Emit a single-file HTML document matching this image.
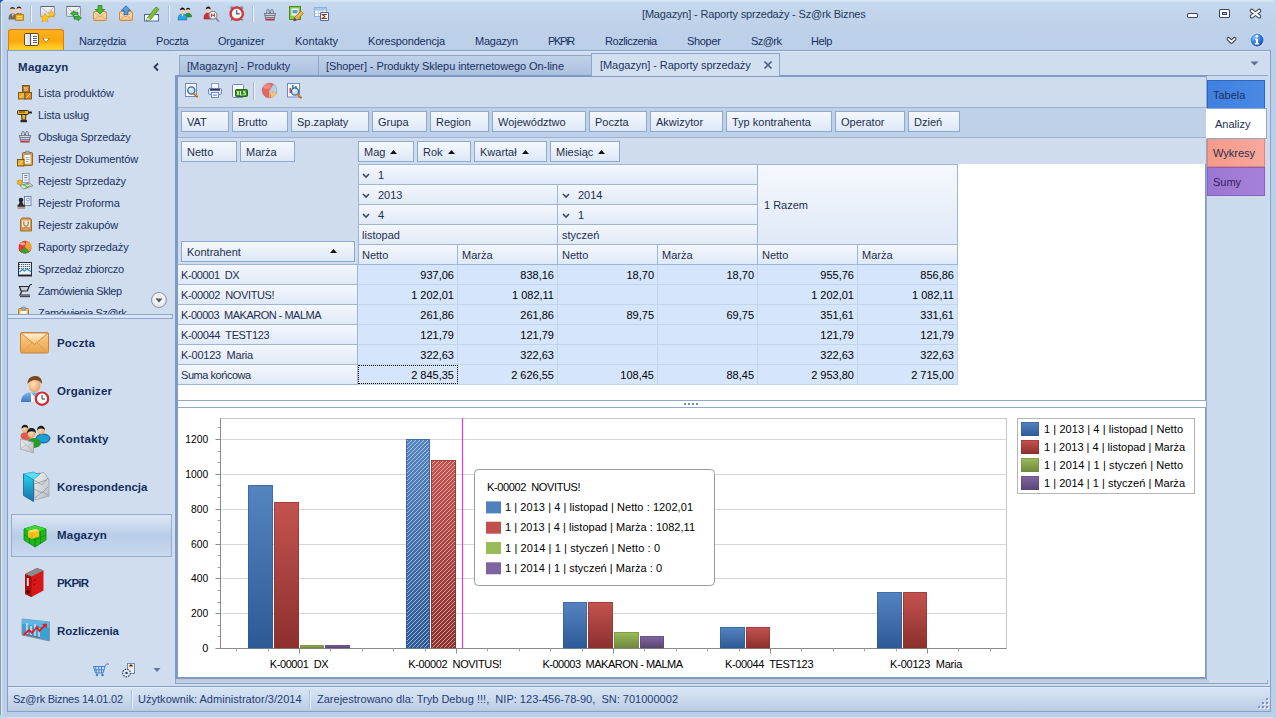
<!DOCTYPE html>
<html><head><meta charset="utf-8"><title>Sz@rk Biznes</title>
<style>
*{box-sizing:border-box;margin:0;padding:0}
html,body{width:1276px;height:718px;overflow:hidden}
body{position:relative;font-family:"Liberation Sans",sans-serif;font-size:11px;color:#1e2f4f;background:#bfd3eb;line-height:13px}
.a{position:absolute}
.t{position:absolute;white-space:pre;height:13px;line-height:13px;color:#1b3260}
/* window */
#win{left:0;top:0;width:1276px;height:718px;background:linear-gradient(#dce8f6 0,#c6d8ee 3px,#bed1e9 26px,#bccfe9 50px,#bccfe9 100%);border-radius:5px 5px 0 0}
#title{left:642px;top:8px;color:#1e395b}
.mi{top:35px;color:#152f5e}
/* left nav */
#client{left:7px;top:50px;width:1264px;height:662px;background:#d0ddef;border:1px solid #86a1c8}
#nav{left:8px;top:51px;width:167px;height:635px;background:#d0ddef}
.ni{left:38px;color:#1b3260}
.ng{left:57px;font-weight:bold;color:#142e5e;font-size:11.5px}
/* tab strip */
#tabstrip{left:175px;top:51px;width:1095px;height:25px;background:#d0ddef;border-top:1px solid #dde8f5}
.tab{top:55px;height:21px;border:1px solid #8ea7c9;border-bottom:none;background:linear-gradient(#bfd1e9,#a9c0de);color:#1e2f4f}
.tab.on{z-index:3;top:53px;height:23px;background:#d2dff0;border-color:#8ea7c9}
/* content frame */
#frame{left:175px;top:75px;width:1093px;height:609px;background:#d0ddef;border:1px solid #8ca5c9}
#pane{left:175px;top:75px;width:1032px;height:604px;background:#fff;border:2px solid #7f9bc4;border-left-width:3px}
#tb{left:178px;top:77px;width:1028px;height:30px;background:#cfdcee}
#flt{left:178px;top:107px;width:1028px;height:31px;background:#bfd1e8;border-top:1px solid #9ab1d2;border-bottom:1px solid #9ab1d2}
#colarea{left:178px;top:138px;width:1028px;height:26px;background:#cfdcee}
#rowarea{left:178px;top:138px;width:180px;height:126px;background:#cfdcee}
.fb{height:21px;border:1px solid #8ea9cd;background:linear-gradient(#f4f8fd,#dde8f6);color:#1e2f4f;padding:4px 0 0 5px;white-space:pre}
.hc{border:1px solid #9db5d6;background:linear-gradient(#f5f8fd,#dfe9f7);color:#1e2f4f;padding:4px 0 0 3px;white-space:pre;height:21px}
.dc{height:20px;background:#d5e5fb;border-right:1px solid #c3d4ec;border-bottom:1px solid #c3d4ec;text-align:right;padding:4px 3px 0 0;color:#000;white-space:pre}
/* status */
#status{left:8px;top:686px;width:1262px;height:25px;background:linear-gradient(#f4f8fc 0,#d6e3f3 1px,#d0def0 8px,#bbcbe2 24px);border-top:1px solid #86a1c8}
</style></head><body>
<div class="a" style="left:0;top:0;width:4px;height:4px;background:#0c52d2"></div><div id="win" class="a"></div><div class="a" style="left:0;top:4px;width:3px;height:714px;background:linear-gradient(90deg,#8c98ab 1px,#dbe7f5 1px,#dbe7f5 2px,#c6d7ec 2px)"></div>
<div class="a" style="left:0;top:715px;width:2px;height:3px;background:#8fe6f6"></div><div class="a" style="left:2px;top:717px;width:1272px;height:1px;background:#d3e2f4"></div><div id="title" class="t" style="left:642px;letter-spacing:-0.173px">[Magazyn] - Raporty sprzedaży - Sz@rk Biznes</div>


<!-- quick toolbar icons -->
<svg class="a" style="left:0;top:0" width="340" height="29" viewBox="0 0 340 29">
 <defs><linearGradient id="qe" x1="0" y1="0" x2="0" y2="1"><stop offset="0" stop-color="#f4f5f7"/><stop offset="1" stop-color="#d4d8de"/></linearGradient>
 <linearGradient id="qo" x1="0" y1="0" x2="0" y2="1"><stop offset="0" stop-color="#fce8c8"/><stop offset="1" stop-color="#f2c088"/></linearGradient></defs>
 <g stroke="#a9bedb"><path d="M30.500 6v17M168.500 6v17M252.500 6v17"/></g>
 <g stroke="#edf3fa"><path d="M31.500 6v17M169.500 6v17M253.500 6v17"/></g>
 <!-- 1 people+card -->
 <g><path d="M8.500 19.500c0-4.500 1.500-6 4-6s4 1.500 4 6z" fill="#7a6a5e"/><path d="M14.500 19c0-4.500 1.500-6 4.500-6s4 1.500 4 6z" fill="#6a5a50"/><path d="M12 14l.8 3 .8-3zM18.500 13.500l.8 3 .8-3z" fill="#f4f4f4"/><ellipse cx="12.500" cy="10.200" rx="2.300" ry="2.800" fill="#f6cdb0"/><ellipse cx="19" cy="9.800" rx="2.300" ry="2.800" fill="#f6cdb0"/><path d="M10 9.500c0-3.500 5-3.500 5 0-1.500-1.300-3.500-1.300-5 0zM16.500 9c0-3.500 5-3.500 5 0-1.500-1.300-3.500-1.300-5 0z" fill="#2a2018"/><rect x="15.500" y="14.500" width="8" height="6" fill="#f0b020" stroke="#b87a08" stroke-width=".8"/><path d="M17 16.500h5M17 18.500h5" stroke="#fde8a0" stroke-width=".8"/></g>
 <!-- 2 envelope stars -->
 <g><rect x="40.500" y="6.500" width="14" height="10" rx="1" fill="url(#qe)" stroke="#8a93a3"/><path d="M40.500 6.500h14" stroke="#5a6578"/><path d="M41 7l6.500 6 6.500-6" fill="none" stroke="#a8afbb" stroke-width=".8"/><path d="M45 13l1.400 3 3.300.4-2.400 2.300.6 3.300-2.900-1.600-2.900 1.600.6-3.300-2.400-2.300 3.300-.4z" fill="#fcc81e" stroke="#e8960c" stroke-width=".6"/><path d="M51.500 10.500l1.100 2.300 2.500.3-1.800 1.800.4 2.500-2.200-1.200-2.200 1.200.4-2.500-1.800-1.800 2.500-.3z" fill="#fcc81e" stroke="#e8960c" stroke-width=".6"/></g>
 <!-- 3 envelope arrows -->
 <g><rect x="66.500" y="6.500" width="14" height="10" rx="1" fill="url(#qe)" stroke="#8a93a3"/><path d="M66.500 6.500h14" stroke="#5a6578"/><path d="M67 7l6.500 6 6.500-6" fill="none" stroke="#a8afbb" stroke-width=".8"/><path d="M78 12.300h-4v-1.600l-3.500 2.800 3.500 2.800v-1.600h4z" fill="#36c036" stroke="#1c6a1c" stroke-width=".6"/><path d="M74 16.800h4v-1.600l3.500 2.800-3.500 2.800v-1.600h-4z" fill="#36c036" stroke="#1c6a1c" stroke-width=".6"/></g>
 <!-- 4 mail in -->
 <g><rect x="93.500" y="11.500" width="13" height="9" rx="1" fill="url(#qo)" stroke="#cc8a3c"/><path d="M94 12l6 5 6-5M94 20l4.500-4M106 20l-4.500-4" fill="none" stroke="#d89a50" stroke-width=".8"/><path d="M98 5.500h4v4h2.800l-4.800 4.700-4.800-4.700h2.800z" fill="#4ab82c" stroke="#2a7a14" stroke-width=".7"/></g>
 <!-- 5 mail out -->
 <g><rect x="119.500" y="11.500" width="13" height="9" rx="1" fill="url(#qo)" stroke="#cc8a3c"/><path d="M120 12l6 5 6-5M120 20l4.500-4M132 20l-4.500-4" fill="none" stroke="#d89a50" stroke-width=".8"/><path d="M124 14.500h4v-4h2.800l-4.800-4.700-4.800 4.700h2.800z" fill="#5a9ae0" stroke="#2a5a9c" stroke-width=".7"/></g>
 <!-- 6 pencil note -->
 <g><rect x="144.500" y="14.500" width="14" height="6.500" fill="#fff" stroke="#4a68b0"/><path d="M147.500 17.500l8.500-10.500 3 2.300-8.500 10.500-4 1.200z" fill="#7cc030" stroke="#4a7a18" stroke-width=".7"/><path d="M147.500 17.500l3 2.300-4 1.200z" fill="#f0d8a0"/><path d="M146.500 21l1.200-.4-.8-.8z" fill="#222"/></g>
 <!-- 7 two users -->
 <g><path d="M185 17c0-3 1.200-4 3-4s3.500 1 3.500 4z" fill="#2e9a2e" stroke="#1a6a1a" stroke-width=".5"/><ellipse cx="188" cy="10.500" rx="1.900" ry="2.300" fill="#f6cdb0"/><path d="M186 10c0-3 4.200-3 4.200 0-1.200-1-3-1-4.200 0z" fill="#1a1410"/><path d="M178 20c0-4.500 1.500-6 4.500-6s4.500 1.500 4.500 6z" fill="#2aa4dc" stroke="#146a9c" stroke-width=".5"/><path d="M181.500 14.200l1 2.500 1-2.500z" fill="#fff"/><ellipse cx="182.500" cy="11" rx="2.300" ry="2.800" fill="#f6cdb0"/><path d="M180 10.500c0-4 5-4 5 0-1.500-1.300-3.500-1.300-5 0z" fill="#1a1410"/></g>
 <!-- 8 user search -->
 <g><path d="M204 19c0-4.500 1.500-6 4.300-6s4.200 1.500 4.200 6z" fill="#d03030" stroke="#8a1414" stroke-width=".5"/><ellipse cx="208.300" cy="10" rx="2.200" ry="2.700" fill="#f6cdb0"/><path d="M205.800 9.500c0-4 5-4 5 0-1.500-1.300-3.500-1.300-5 0z" fill="#1a1410"/><circle cx="213" cy="15.200" r="3.900" fill="#fff" stroke="#8a8e98" stroke-width="1.200"/><path d="M216 18.300l2.500 2.700" stroke="#8a8e98" stroke-width="1.800" stroke-linecap="round"/><path d="M211.600 13.500v3.400M214.400 13.500v3.400M211.600 15.200h2.800" stroke="#d02020" stroke-width="1"/></g>
 <!-- 9 alarm clock -->
 <g><circle cx="231.800" cy="7.800" r="1.800" fill="#8a94a8"/><circle cx="241.600" cy="7.800" r="1.800" fill="#8a94a8"/><path d="M232.500 18.500l-1.500 2M241 18.500l1.500 2" stroke="#5a6478" stroke-width="1.200"/><circle cx="236.700" cy="13.700" r="6" fill="#fff" stroke="#e03838" stroke-width="2.200"/><circle cx="236.700" cy="13.700" r="7" fill="none" stroke="#b82020" stroke-width=".5"/><path d="M236.700 10v3.900h3" fill="none" stroke="#3a4a7a" stroke-width="1.100"/></g>
 <!-- 10 basket -->
 <g fill="none" stroke="#5e6270"><path d="M266.500 14c0-6 3-6 3-1M273.500 14c0-6-3-6-3-1" stroke-width=".9"/><path d="M264 13.500h12M264.800 15.500h10.400M265.300 17.500h9.400" stroke="#7a7e8c" stroke-width="1.100"/><path d="M264.500 13.500l1.200 5.500h8.600l1.200-5.500" stroke-width=".8"/><path d="M265.500 19.800h9" stroke="#d01818" stroke-width="1.300"/></g>
 <!-- 11 edit form -->
 <g><rect x="289.500" y="6.500" width="11" height="13" fill="#8cc850" stroke="#4a8a20"/><rect x="291.500" y="8.500" width="7" height="7" fill="#f4f8f0"/><rect x="292.500" y="10" width="5" height="3.500" fill="#5aa0d8"/><path d="M294.500 17.500l6.500-6.500 2.500 2.500-6.500 6.500-3.500 1z" fill="#f0b048" stroke="#a86a18" stroke-width=".7"/><path d="M293.500 21l1-3.500 2.500 2.500z" fill="#2a4a8a"/></g>
 <!-- 12 table sigma -->
 <g><rect x="314.500" y="7.500" width="12" height="9" fill="#fff" stroke="#8ab0e0"/><rect x="315" y="8" width="11" height="2" fill="#a8c8ee"/><path d="M314.500 10.500h12M314.500 13.500h12M318.500 8v8.500M322.500 8v8.500" stroke="#a8c8ee" stroke-width=".8"/><rect x="320.500" y="12.500" width="8" height="8" rx=".8" fill="#fff" stroke="#4a64a8" stroke-width="1.100"/><path d="M326.800 14.500h-4.300l2.200 2-2.200 2h4.300" fill="none" stroke="#8a3410" stroke-width="1.200"/></g>
</svg>
<!-- window buttons -->
<svg class="a" style="left:1180px;top:4px" width="90" height="22" viewBox="1180 4 90 22">
 <rect x="1187.500" y="13.500" width="10" height="4" rx="1.200" fill="#fff" stroke="#3b4560" stroke-width="1.100"/>
 <rect x="1219.500" y="9.500" width="10" height="8" rx="1.200" fill="#fff" stroke="#3b4560" stroke-width="1.100"/><rect x="1222.500" y="12.500" width="4" height="2" fill="#a8c0e4" stroke="#3b4560" stroke-width="1"/>
 <path d="M1251.800 10.800l7.400 5.600M1259.200 10.800l-7.400 5.600" stroke="#3b4560" stroke-width="4.200" stroke-linecap="round"/><path d="M1251.800 10.800l7.400 5.600M1259.200 10.800l-7.400 5.600" stroke="#fff" stroke-width="2.100" stroke-linecap="round"/>
</svg>
<!-- app button -->
<div class="a" style="left:8px;top:29px;width:56px;height:21px;border:1px solid #e8780a;border-bottom:none;border-radius:3px 3px 0 0;background:linear-gradient(#fbb01a,#fba70a 55%,#fdc520 80%,#fdd228)"></div>
<svg class="a" style="left:8px;top:29px" width="56" height="22" viewBox="0 0 56 22">
 <rect x="16.500" y="4.500" width="14" height="12" rx="1.500" fill="#fff" stroke="#6b4a1a"/><rect x="17.500" y="5.500" width="4.500" height="10" fill="#e6e8ec"/><path d="M22.500 4.500v12" stroke="#4a5878" stroke-width="1.200"/><path d="M25 7.500h4M25 9.500h4M25 11.500h4M25 13.500h4" stroke="#555f78" stroke-width="1"/>
 <path d="M34 8.900h8l-4 4.900z" fill="#a86c10"/><path d="M35.300 9.600h5.400l-2.700 3.300z" fill="#fff"/>
</svg>
<div class="t mi" style="left:79px;letter-spacing:-0.291px">Narzędzia</div>
<div class="t mi" style="left:156px;letter-spacing:-0.208px">Poczta</div>
<div class="t mi" style="left:218px;letter-spacing:-0.212px">Organizer</div>
<div class="t mi" style="left:295px;letter-spacing:0.027px">Kontakty</div>
<div class="t mi" style="left:368px;letter-spacing:-0.178px">Korespondencja</div>
<div class="t mi" style="left:475px;letter-spacing:-0.240px">Magazyn</div>
<div class="t mi" style="left:548px;letter-spacing:-1.327px">PKPiR</div>
<div class="t mi" style="left:605px;letter-spacing:-0.415px">Rozliczenia</div>
<div class="t mi" style="left:687px;letter-spacing:-0.317px">Shoper</div>
<div class="t mi" style="left:751px;letter-spacing:-0.568px">Sz@rk</div>
<div class="t mi" style="left:811px;letter-spacing:-0.408px">Help</div>
<svg class="a" style="left:1222px;top:30px" width="48" height="20" viewBox="1222 30 48 20">
 <defs><radialGradient id="inf" cx=".35" cy=".3" r=".8"><stop offset="0" stop-color="#8cc0f4"/><stop offset=".5" stop-color="#3a80dc"/><stop offset="1" stop-color="#1440b0"/></radialGradient></defs>
 <path d="M1228.500 38.800l3 3 3-3" fill="none" stroke="#2a3450" stroke-width="3.800" stroke-linejoin="round" stroke-linecap="round"/><path d="M1228.500 38.800l3 3 3-3" fill="none" stroke="#fff" stroke-width="1.900" stroke-linejoin="round" stroke-linecap="round"/>
 <circle cx="1257" cy="40" r="7.300" fill="#dce8f8"/><circle cx="1257" cy="40" r="6.500" fill="url(#inf)"/>
 <path d="M1255.300 38.800h2.700v4.300h1v1.300h-4.200v-1.300h1.200v-3h-.7z" fill="#fff"/><circle cx="1257" cy="36.300" r="1.300" fill="#fff"/>
</svg>

<div id="client" class="a"></div><div id="nav" class="a"></div>
<div class="t hd" style="left:18px;top:61px;font-weight:bold;font-size:11.5px;color:#142e5e;letter-spacing:0.304px">Magazyn</div>
<svg class="a" style="left:150px;top:61px" width="12" height="12" viewBox="0 0 12 12"><path d="M8 2.500l-3.500 3.500 3.500 3.500" fill="none" stroke="#2a3a58" stroke-width="1.800"/></svg>
<div class="a" style="left:8px;top:80px;width:167px;height:235px;overflow:hidden">
<div class="t ni" style="left:30px;top:7px;letter-spacing:-0.075px">Lista produktów</div>
<div class="t ni" style="left:30px;top:29px;letter-spacing:-0.159px">Lista usług</div>
<div class="t ni" style="left:30px;top:51px;letter-spacing:-0.200px">Obsługa Sprzedaży</div>
<div class="t ni" style="left:30px;top:73px;letter-spacing:-0.117px">Rejestr Dokumentów</div>
<div class="t ni" style="left:30px;top:95px;letter-spacing:-0.111px">Rejestr Sprzedaży</div>
<div class="t ni" style="left:30px;top:117px;letter-spacing:-0.089px">Rejestr Proforma</div>
<div class="t ni" style="left:30px;top:139px;letter-spacing:-0.073px">Rejestr zakupów</div>
<div class="t ni" style="left:30px;top:161px;letter-spacing:-0.057px">Raporty sprzedaży</div>
<div class="t ni" style="left:30px;top:183px;letter-spacing:-0.275px">Sprzedaż zbiorczo</div>
<div class="t ni" style="left:30px;top:205px;letter-spacing:-0.378px">Zamówienia Sklep</div>
<div class="t ni" style="left:30px;top:227px;letter-spacing:-0.449px">Zamówienia Sz@rk</div>
<svg class="a" style="left:0;top:0" width="40" height="250" viewBox="8 80 40 250">
 <!-- boxes -->
 <g stroke="#7a4e0c" stroke-width=".9"><rect x="22.500" y="85.500" width="7" height="7" fill="#b87a20"/><rect x="18.500" y="92.500" width="6.500" height="6.500" fill="#e8b030"/><rect x="25" y="92.500" width="6.500" height="6.500" fill="#e88a30"/></g><rect x="24.500" y="87.500" width="3" height="3" fill="#e0b060" stroke="#f0d090" stroke-width=".5"/><path d="M20 97.500l3.500-3.500M26.500 97.500l3.500-3.500" stroke="#fbe0a0" stroke-width=".9"/>
 <!-- drill -->
 <g><rect x="17.500" y="110.500" width="11" height="4" rx="1" fill="#f2b020" stroke="#2a2418" stroke-width=".9"/><path d="M28.500 111.500h3.500v2h-3.500z" fill="#2a2a30"/><path d="M19 112h6" stroke="#2a2418" stroke-width=".8"/><path d="M21.500 114.500h4.500l-.5 5.500h-3.500z" fill="#f2b020" stroke="#2a2418" stroke-width=".9"/><rect x="20.500" y="120" width="6.500" height="2.300" rx=".5" fill="#2a2a30"/></g>
 <!-- basket -->
 <g fill="none" stroke="#5e6270"><path d="M21.500 136c0-6 3-6 3-1M28.500 136c0-6-3-6-3-1" stroke-width=".9"/><path d="M19 135.500h12M19.800 137.500h10.400M20.300 139.500h9.400" stroke="#7a7e8c" stroke-width="1.100"/><path d="M19.500 135.500l1.200 5.500h8.600l1.200-5.500" stroke-width=".8"/><path d="M20.500 141.800h9" stroke="#d01818" stroke-width="1.300"/></g>
 <!-- docs clipboard -->
 <g><rect x="22.500" y="152.500" width="10" height="13" rx="1" fill="#d8a050" stroke="#8a5a18" stroke-width=".9"/><rect x="24.500" y="155" width="6" height="8.500" fill="#fff"/><rect x="25.500" y="151" width="4" height="3" rx=".8" fill="#a8aab0" stroke="#6a6c74" stroke-width=".5"/><path d="M25.500 157.500h4M25.500 159.500h4M25.500 161.500h3" stroke="#8890a0" stroke-width=".7"/><rect x="17.500" y="159.500" width="6.500" height="6.500" fill="#e8b030" stroke="#7a4e0c" stroke-width=".9"/><path d="M19 164.500l3.500-3.500" stroke="#fbe0a0" stroke-width=".9"/></g>
 <!-- sales register -->
 <g><rect x="22.500" y="173.500" width="6.500" height="9" fill="#f6f8fc" stroke="#7a8aa8" stroke-width=".8"/><path d="M24 175.500h3.500M24 177.500h3.500" stroke="#5a80c0" stroke-width=".9"/><rect x="24" y="179" width="3.500" height="2" fill="#c8d4e8"/><ellipse cx="19.800" cy="182.300" rx="2.600" ry="2.300" fill="#f4b820" stroke="#b87a08" stroke-width=".6"/><path d="M20 185.500l9-2.500 4 2.800-9.500 3.200z" fill="#e4f0dc" stroke="#5a6a5a" stroke-width=".7"/><path d="M23 186l6-1.800M25 187.500l5.500-1.800M24.500 184.500l3 3" stroke="#4a9a3a" stroke-width=".7"/></g>
 <!-- proforma stamp -->
 <g><rect x="24.500" y="196.500" width="6.500" height="9" fill="#f6f8fc" stroke="#5a78c0" stroke-width=".9"/><circle cx="28" cy="199.500" r="1.500" fill="none" stroke="#5a78c0" stroke-width=".8"/><path d="M26 203h3.500" stroke="#8aa0d0" stroke-width=".8"/><circle cx="21" cy="200" r="2.300" fill="#26262c"/><path d="M19.800 201.500h2.400l1.300 3.500h-5z" fill="#26262c"/><rect x="17.500" y="204.800" width="7.500" height="2" fill="#3a2a24"/><path d="M17.500 208h7.500" stroke="#8a5a40" stroke-width="1"/></g>
 <!-- purchases -->
 <g><path d="M20.500 219.500l1.500-1.500h8l1.500 1.500v11.500h-11z" fill="#d8a058" stroke="#9a6420" stroke-width=".9"/><rect x="22" y="220.500" width="8" height="6.500" fill="#f4e4cc"/><path d="M23.800 221.500v2.500a2.200 2.200 0 0 0 4.400 0v-2.500" fill="none" stroke="#7a6a5a" stroke-width="1"/><path d="M21 230.500l5-3.500 5 3.500" fill="none" stroke="#b8803a" stroke-width=".7"/></g>
 <!-- pie -->
 <g><ellipse cx="25" cy="248.500" rx="6.300" ry="5" fill="#8a2a20"/><circle cx="25" cy="247" r="6.300" fill="#e03a30"/><path d="M25 247l-4.600 4.400a6.300 6.300 0 0 0 9.200 0z" fill="#3aa030"/><path d="M25 247l1.500-6.100a6.300 6.300 0 0 1 4.800 6.500 6.300 6.300 0 0 1-1.700 4z" fill="#f4a030"/><ellipse cx="22.800" cy="243.800" rx="2.600" ry="1.500" fill="#fff" opacity=".55"/></g>
 <!-- sprzedaz zbiorczo -->
 <g><rect x="18.500" y="262.500" width="13" height="12.500" fill="#eef2f8" stroke="#2a3040" stroke-width="1"/><path d="M19 264.500h12M19 266.500h12M19 268.500h12" stroke="#2a3040" stroke-width=".8" stroke-dasharray="1.200 .8"/><path d="M19.500 272l3-2.500 2 1.500 2.500-2 4 2.500" fill="none" stroke="#2a8ad8" stroke-width="1.100"/><path d="M18 275.800h14" stroke="#1a1a20" stroke-width="1.300"/></g>
 <!-- zam sklep -->
 <g><path d="M19.500 286.500h9.500l-1.500 4.500h-6.500z" fill="#c8ccd4" stroke="#2a2a30" stroke-width="1.200"/><path d="M29 286.500l1.500-2h1.500" fill="none" stroke="#2a2a30" stroke-width="1.100"/><path d="M22 291l-2 4h10" fill="none" stroke="#2a2a30" stroke-width="1.200"/><path d="M20 296.500h10" stroke="#44464e" stroke-width="1.400"/></g>
 <!-- zam szark -->
 <g><rect x="18.500" y="308.500" width="10" height="12" rx="1" fill="#e8b860" stroke="#a87828" stroke-width=".9"/><rect x="20.500" y="311" width="6" height="8" fill="#fff"/><rect x="21.500" y="307" width="4" height="3" rx=".8" fill="#a8aab0" stroke="#6a6c74" stroke-width=".5"/></g>
</svg>
</div>
<svg class="a" style="left:150px;top:291px" width="18" height="18" viewBox="0 0 18 18"><circle cx="9" cy="9" r="7.500" fill="#e4e6ea" stroke="#8a93a3"/><circle cx="9" cy="8" r="6" fill="#f4f5f7" opacity=".7"/><path d="M5.500 7.500h7l-3.500 4z" fill="#4a5468"/></svg>
<div class="a" style="left:8px;top:314px;width:165px;height:5px;background:#d9e5f4;border:1px solid #8fa8cb;border-left:none"></div>
<div class="a" style="left:11px;top:514px;width:161px;height:43px;border:1px solid #93acd0;background:linear-gradient(#dbe6f4,#b9cde7 50%,#c9d9ee)"></div>
<div class="t ng" style="top:337px;letter-spacing:0.184px">Poczta</div>
<div class="t ng" style="top:385px;letter-spacing:0.164px">Organizer</div>
<div class="t ng" style="top:433px;letter-spacing:0.328px">Kontakty</div>
<div class="t ng" style="top:481px;letter-spacing:0.030px">Korespondencja</div>
<div class="t ng" style="top:529px;letter-spacing:0.204px">Magazyn</div>
<div class="t ng" style="top:577px;letter-spacing:-0.789px">PKPiR</div>
<div class="t ng" style="top:625px;letter-spacing:-0.064px">Rozliczenia</div>
<svg class="a" style="left:8px;top:322px" width="167" height="364" viewBox="8 322 167 364">
<defs>
<linearGradient id="env" x1="0" y1="0" x2="0" y2="1"><stop offset="0" stop-color="#fbd08a"/><stop offset="1" stop-color="#eaa24a"/></linearGradient>
<linearGradient id="envf" x1="0" y1="0" x2="0" y2="1"><stop offset="0" stop-color="#fff2d8"/><stop offset="1" stop-color="#f6c070"/></linearGradient>
<linearGradient id="gry" x1="0" y1="0" x2="1" y2="1"><stop offset="0" stop-color="#f4f4f4"/><stop offset="1" stop-color="#b8bcc2"/></linearGradient>
<linearGradient id="cy" x1="0" y1="0" x2="0" y2="1"><stop offset="0" stop-color="#22d4ee"/><stop offset="1" stop-color="#1a6ea8"/></linearGradient>
<linearGradient id="body" x1="0" y1="0" x2="0" y2="1"><stop offset="0" stop-color="#7fb4e8"/><stop offset="1" stop-color="#3a78c4"/></linearGradient>
<radialGradient id="face" cx=".4" cy=".4" r=".7"><stop offset="0" stop-color="#ffe0b8"/><stop offset="1" stop-color="#e0a060"/></radialGradient>
</defs>
<!-- Poczta envelope -->
<g><rect x="20.500" y="332.500" width="28" height="20.500" rx="1.500" fill="url(#env)" stroke="#c8843a"/><path d="M21 353l11-10M48 353l-11-10" stroke="#d89a50" stroke-width=".8" fill="none"/><path d="M21 333l13.500 11.500L48 333z" fill="url(#envf)" stroke="#c8843a" stroke-width=".9"/></g>
<!-- Organizer -->
<g><path d="M21 402c0-6 4-9 8-9.500h10c3 .5 5 3 5 9.500z" fill="url(#body)"/><path d="M31 392.500l3.500 4 3.500-4v9.500h-7z" fill="#f4f6fa"/><ellipse cx="34.500" cy="385.500" rx="6" ry="7" fill="url(#face)"/><path d="M27.500 384c0-6 4-8 8-8 4 0 7 3 6.500 8-2-3-5-4.500-8-4-2 .3-4.500 1.500-6.500 4z" fill="#7a4a1c"/><circle cx="42" cy="398.700" r="6.200" fill="#fff" stroke="#d22a2a" stroke-width="2.200"/><path d="M42 395v4h3" fill="none" stroke="#334" stroke-width="1"/></g>
<!-- Kontakty -->
<g><ellipse cx="26" cy="436" rx="5.500" ry="4" fill="#e05a50"/><ellipse cx="43" cy="438.500" rx="7" ry="4.500" fill="#1aa0d8" stroke="#0a3a78" stroke-width=".8"/><ellipse cx="34" cy="443" rx="7" ry="5" fill="#2a9a2a"/><ellipse cx="25" cy="429" rx="3.200" ry="3.800" fill="url(#face)"/><path d="M21.500 429c-.5-5.500 7-6 7 0-.8-2-5.500-2.500-7 0z" fill="#1c1c1c"/><ellipse cx="41" cy="430.500" rx="3.500" ry="4" fill="url(#face)"/><path d="M37.300 430.500c-.8-6 8-6.500 7.700 0-1-2.300-6-2.800-7.700 0z" fill="#1c1c1c"/><ellipse cx="31.500" cy="433.500" rx="4" ry="4.600" fill="url(#face)"/><path d="M27.300 433.500c-.8-7 9-7.500 8.700 0-1.200-2.800-7-3.200-8.700 0z" fill="#1c1c1c"/><path d="M20.500 439l13 3.500v10.500l-13-4z" fill="url(#gry)" stroke="#9a9ea6" stroke-width=".7"/><path d="M20.500 439l7 7.500 6-4M20.500 449l6-4.500M33.500 453l-5-6.500" fill="none" stroke="#a8acb4" stroke-width=".6"/></g>
<!-- Korespondencja -->
<g><path d="M33 474l11 -1.500 5 6.500v17l-14 4z" fill="url(#gry)" stroke="#9a9ea6" stroke-width=".7"/><path d="M34 480l8 5 6-7M34 489l8 4 6-6M34 484l13-4M35 498l7-6 6 3" fill="none" stroke="#8a8e98" stroke-width=".7"/><path d="M23.500 474l10 5.500v22l-10-6z" fill="url(#cy)" stroke="#1a5a98" stroke-width=".8"/><path d="M23.500 474l10-2 3 1.500h4l-7 6z" fill="#5ae0f4" stroke="#1a8ac8" stroke-width=".6"/></g>
<!-- Magazyn cube -->
<g><path d="M24 529l11-3.500 11 3.500v11l-11 7-11-7z" fill="#1eb81e" stroke="#0e8a0e" stroke-width=".8"/><path d="M24 529l11 4 11-4M35 533v14M24 535l11 5 11-5M29.500 531v13M40.500 531v13" fill="none" stroke="#0e8a0e" stroke-width=".8"/><path d="M24 529l11-3.500 11 3.500-11 4z" fill="#3ad83a"/><path d="M28 531l7.500-2 3.500 1.500v6l-7 2.500-4-2z" fill="#f8c018"/><path d="M28 531l4 1.500 7-2-3.500-1.500z" fill="#fde060"/><path d="M32 532.500v6.500" stroke="#d89a08" stroke-width=".8"/></g>
<!-- PKPiR binder -->
<g><path d="M25 574l12-6 6.500 2.500v20l-12 6.500-6.500-3z" fill="#d81818"/><path d="M25 574l6.500 2.500v20.500l-6.500-3z" fill="#a80e0e"/><path d="M25 574l12-6 6.500 2.500-12 6z" fill="#8a8a8a"/><rect x="26.800" y="578" width="2" height="8" fill="#f4d8d8"/><circle cx="28" cy="592" r="1.500" fill="#200"/><path d="M33 581l3-1.500M33 585l2.500-1.200" stroke="#8a0a0a" stroke-width=".9"/></g>
<!-- Rozliczenia -->
<g><path d="M22 619l27.500 3v19l-27.500-6z" fill="#3aa0d8" stroke="#8a8e98" stroke-width=".9"/><path d="M22 619l27.500 3v6l-27.500-4z" fill="#5ab8e8"/><path d="M27 623v11.500M31 626v9.500M35 624v12M39 628v9" stroke="#c8d4e0" stroke-width="1.800"/><path d="M26 634.500l14 3" stroke="#667" stroke-width="1"/><path d="M23.500 635l5.500-5 3 3 5-6 2.500 4 5-5.500" fill="none" stroke="#e81818" stroke-width="1.800"/><path d="M42 624l5-.5-.5 5z" fill="#e81818"/></g>
<!-- footer icons -->
<g fill="none" stroke="#3a7ac8" stroke-width=".9"><path d="M93.500 666.500h11.500l-2 6.500h-7.500zM105 666.500l1.500-2.500h2.500M95.500 666.500l1 6.500M98.500 666.500l.5 6.500M101.500 666.500v6.500M94.500 669.800h10"/><circle cx="97" cy="675" r=".9" fill="#3a7ac8"/><circle cx="102.500" cy="675" r=".9" fill="#3a7ac8"/></g>
<g><rect x="127.500" y="663.500" width="7" height="10" fill="#e8eef8" stroke="#6a84b4" stroke-width=".9"/><rect x="129" y="665" width="4" height="2" fill="#e88a18"/><rect x="130" y="664.500" width="2" height="1.500" fill="#223"/><circle cx="126.500" cy="673" r="3.800" fill="#e8eef8" stroke="#3a4a6a" stroke-width="1.300" stroke-dasharray="1.600 1"/><circle cx="126.500" cy="673" r="1.300" fill="#3a4a6a"/></g>
<path d="M153.500 668h7l-3.500 4z" fill="#66789a"/>
</svg>


<div id="tabstrip" class="a"></div>
<div class="a tab" style="left:179px;width:140px"></div><div class="t" style="left:187px;top:60px;letter-spacing:-0.034px">[Magazyn] - Produkty</div>
<div class="a tab" style="left:318px;width:274px"></div><div class="t" style="left:326px;top:60px;letter-spacing:-0.088px">[Shoper] - Produkty Sklepu internetowego On-line</div>
<div id="frame" class="a"></div>
<div class="a tab on" style="left:591px;width:189px"></div><div class="t" style="z-index:4;left:600px;top:59px;letter-spacing:-0.055px">[Magazyn] - Raporty sprzedaży</div>
<svg class="a" style="z-index:4;left:762px;top:59px" width="12" height="12" viewBox="0 0 12 12"><path d="M2.500 2.500l7 7M9.500 2.500l-7 7" stroke="#4f5f7f" stroke-width="1.700"/></svg>
<svg class="a" style="left:1249px;top:60px" width="12" height="8" viewBox="0 0 12 8"><path d="M1.500 1.500h8l-4 4z" fill="#5b6f92"/></svg>

<div class="a" style="left:176px;top:679px;width:1033px;height:4px;background:linear-gradient(#b9c7db,#c7d3e4);border-radius:0 0 3px 0"></div><div id="pane" class="a"></div><div id="tb" class="a"></div><div id="flt" class="a"></div><div id="colarea" class="a"></div><div id="rowarea" class="a"></div>
<div class="a fb" style="left:181px;top:111px;width:48px">VAT</div>
<div class="a fb" style="left:232px;top:111px;width:56px">Brutto</div>
<div class="a fb" style="left:291px;top:111px;width:78px">Sp.zapłaty</div>
<div class="a fb" style="left:372px;top:111px;width:55px">Grupa</div>
<div class="a fb" style="left:430px;top:111px;width:59px">Region</div>
<div class="a fb" style="left:492px;top:111px;width:94px">Województwo</div>
<div class="a fb" style="left:589px;top:111px;width:58px">Poczta</div>
<div class="a fb" style="left:650px;top:111px;width:73px">Akwizytor</div>
<div class="a fb" style="left:726px;top:111px;width:106px">Typ kontrahenta</div>
<div class="a fb" style="left:835px;top:111px;width:70px">Operator</div>
<div class="a fb" style="left:908px;top:111px;width:52px">Dzień</div>
<div class="a fb" style="left:181px;top:141px;width:56px">Netto</div>
<div class="a fb" style="left:240px;top:141px;width:55px">Marża</div>
<div class="a fb" style="left:358px;top:141px;width:56px">Mag<svg width="7" height="4" viewBox="0 0 7 4" style="margin-left:5px;vertical-align:2px"><path d="M0 4l3.500-4 3.500 4z" fill="#111"/></svg></div>
<div class="a fb" style="left:417px;top:141px;width:54px">Rok<svg width="7" height="4" viewBox="0 0 7 4" style="margin-left:5px;vertical-align:2px"><path d="M0 4l3.500-4 3.500 4z" fill="#111"/></svg></div>
<div class="a fb" style="left:474px;top:141px;width:73px">Kwartał<svg width="7" height="4" viewBox="0 0 7 4" style="margin-left:5px;vertical-align:2px"><path d="M0 4l3.500-4 3.500 4z" fill="#111"/></svg></div>
<div class="a fb" style="left:550px;top:141px;width:70px">Miesiąc<svg width="7" height="4" viewBox="0 0 7 4" style="margin-left:5px;vertical-align:2px"><path d="M0 4l3.500-4 3.500 4z" fill="#111"/></svg></div>
<div class="a fb" style="left:181px;top:241px;width:174px">Kontrahent<svg class="a" style="left:148px;top:7px" width="7" height="4" viewBox="0 0 7 4"><path d="M0 4l3.500-4 3.500 4z" fill="#111"/></svg></div>
<svg class="a" style="left:178px;top:77px" width="140" height="30" viewBox="178 77 140 30">
 <!-- preview -->
 <g><rect x="185.500" y="83.500" width="11" height="13" fill="#fbfcfe" stroke="#6f86c4"/><circle cx="191.300" cy="90.500" r="3.600" fill="#bfe0f6" stroke="#3a64a8" stroke-width="1.300"/><circle cx="190.500" cy="89.600" r="1.400" fill="#eaf6fd"/><path d="M194 93.500l3 3" stroke="#b06a1a" stroke-width="2.200" stroke-linecap="round"/><path d="M194.200 93.200l2.600 2.600" stroke="#f0b060" stroke-width=".8" stroke-linecap="round"/></g>
 <!-- printer -->
 <g><rect x="211.500" y="83.500" width="7" height="5" fill="#f6f8fc" stroke="#8a9cc8"/><rect x="208.500" y="88.500" width="13" height="6" rx="1.500" fill="#e6ebf5" stroke="#6f86c4"/><path d="M210 89.800h10" stroke="#2e3a5c" stroke-width="1.800"/><rect x="211.500" y="92.500" width="7" height="5" fill="#fff" stroke="#6f86c4"/><path d="M213 95.200h4" stroke="#4a9ad8" stroke-width="1.200"/></g>
 <!-- xls -->
 <g><rect x="232.500" y="84.500" width="11" height="13" rx="1" fill="#f8fafd" stroke="#6f86c4"/><rect x="235.500" y="89.500" width="12" height="7" rx="1" fill="#2e8a12" stroke="#1f6a0a"/><path d="M237 91l2 4M239 91l-2 4M240.500 91v4h2M245.500 91.200h-1.800v1.600h1.600v2h-2" fill="none" stroke="#fff" stroke-width=".9"/></g>
 <path d="M253.500 82v18" stroke="#9fb6d6"/><path d="M254.500 82v18" stroke="#eef3fa"/>
 <!-- pie -->
 <g><circle cx="269.500" cy="90.500" r="7.300" fill="#e06a62" stroke="#c2564e" stroke-width=".6"/><path d="M269.500 90.500l4-6.100a7.300 7.300 0 0 1 3 8z" fill="#a8d4ee"/><path d="M269.500 90.500l7 1.900a7.300 7.300 0 0 1-5.500 5.300z" fill="#f2c078"/><path d="M269.500 90.500v7.300" stroke="#f4d0c8" stroke-width=".5"/><ellipse cx="267" cy="86.500" rx="4" ry="2.200" fill="#f6a8a0" opacity=".55"/></g>
 <!-- chart preview -->
 <g><rect x="287.500" y="83.500" width="12" height="13.500" fill="#fbfcfe" stroke="#6f86c4"/><rect x="289.500" y="88" width="1.800" height="5" fill="#e04848"/><rect x="292" y="85" width="1.800" height="4" fill="#4a8ad8"/><rect x="295" y="86" width="1.800" height="3" fill="#4aa82a"/><circle cx="295" cy="91.500" r="3.600" fill="#bfe0f6" stroke="#3a64a8" stroke-width="1.300"/><circle cx="294.200" cy="90.600" r="1.400" fill="#eaf6fd"/><path d="M297.800 94.500l3 3" stroke="#b06a1a" stroke-width="2.200" stroke-linecap="round"/><path d="M298 94.200l2.600 2.600" stroke="#f0b060" stroke-width=".8" stroke-linecap="round"/></g>
</svg>


<div class="a hc" style="left:358px;top:164px;width:400px;height:21px;"><svg width="8" height="6" viewBox="0 0 8 6" style="margin:0 8px 0 0;vertical-align:0px"><path d="M1 1l3 3 3-3" fill="none" stroke="#3a4a66" stroke-width="1.600"/></svg>1</div>
<div class="a hc" style="left:358px;top:184px;width:200px;height:21px;"><svg width="8" height="6" viewBox="0 0 8 6" style="margin:0 8px 0 0;vertical-align:0px"><path d="M1 1l3 3 3-3" fill="none" stroke="#3a4a66" stroke-width="1.600"/></svg>2013</div>
<div class="a hc" style="left:557px;top:184px;width:201px;height:21px;padding-left:4px"><svg width="8" height="6" viewBox="0 0 8 6" style="margin:0 8px 0 0;vertical-align:0px"><path d="M1 1l3 3 3-3" fill="none" stroke="#3a4a66" stroke-width="1.600"/></svg>2014</div>
<div class="a hc" style="left:358px;top:204px;width:200px;height:21px;"><svg width="8" height="6" viewBox="0 0 8 6" style="margin:0 8px 0 0;vertical-align:0px"><path d="M1 1l3 3 3-3" fill="none" stroke="#3a4a66" stroke-width="1.600"/></svg>4</div>
<div class="a hc" style="left:557px;top:204px;width:201px;height:21px;padding-left:4px"><svg width="8" height="6" viewBox="0 0 8 6" style="margin:0 8px 0 0;vertical-align:0px"><path d="M1 1l3 3 3-3" fill="none" stroke="#3a4a66" stroke-width="1.600"/></svg>1</div>
<div class="a hc" style="left:358px;top:224px;width:200px;height:21px;">listopad</div>
<div class="a hc" style="left:557px;top:224px;width:201px;height:21px;padding-left:4px">styczeń</div>
<div class="a hc" style="left:757px;top:164px;width:201px;height:81px;padding-top:34px;padding-left:6px">1 Razem</div>
<div class="a hc" style="left:358px;top:244px;width:100px;height:21px;">Netto</div>
<div class="a hc" style="left:457px;top:244px;width:101px;height:21px;padding-left:4px">Marża</div>
<div class="a hc" style="left:557px;top:244px;width:101px;height:21px;padding-left:4px">Netto</div>
<div class="a hc" style="left:657px;top:244px;width:101px;height:21px;padding-left:4px">Marża</div>
<div class="a hc" style="left:757px;top:244px;width:101px;height:21px;padding-left:4px">Netto</div>
<div class="a hc" style="left:857px;top:244px;width:101px;height:21px;padding-left:4px">Marża</div>
<div class="a hc rh" style="left:178px;top:264px;width:180px;height:21px;border-left:none;letter-spacing:-0.428px">K-00001  DX</div>
<div class="a dc" style="left:358px;top:265px;width:100px">937,06</div>
<div class="a dc" style="left:458px;top:265px;width:100px">838,16</div>
<div class="a dc" style="left:558px;top:265px;width:100px">18,70</div>
<div class="a dc" style="left:658px;top:265px;width:100px">18,70</div>
<div class="a dc" style="left:758px;top:265px;width:100px">955,76</div>
<div class="a dc" style="left:858px;top:265px;width:100px">856,86</div>
<div class="a hc rh" style="left:178px;top:284px;width:180px;height:21px;border-left:none;letter-spacing:-0.379px">K-00002  NOVITUS!</div>
<div class="a dc" style="left:358px;top:285px;width:100px">1 202,01</div>
<div class="a dc" style="left:458px;top:285px;width:100px">1 082,11</div>
<div class="a dc" style="left:558px;top:285px;width:100px"></div>
<div class="a dc" style="left:658px;top:285px;width:100px"></div>
<div class="a dc" style="left:758px;top:285px;width:100px">1 202,01</div>
<div class="a dc" style="left:858px;top:285px;width:100px">1 082,11</div>
<div class="a hc rh" style="left:178px;top:304px;width:180px;height:21px;border-left:none;letter-spacing:-0.510px">K-00003  MAKARON - MALMA</div>
<div class="a dc" style="left:358px;top:305px;width:100px">261,86</div>
<div class="a dc" style="left:458px;top:305px;width:100px">261,86</div>
<div class="a dc" style="left:558px;top:305px;width:100px">89,75</div>
<div class="a dc" style="left:658px;top:305px;width:100px">69,75</div>
<div class="a dc" style="left:758px;top:305px;width:100px">351,61</div>
<div class="a dc" style="left:858px;top:305px;width:100px">331,61</div>
<div class="a hc rh" style="left:178px;top:324px;width:180px;height:21px;border-left:none;letter-spacing:-0.358px">K-00044  TEST123</div>
<div class="a dc" style="left:358px;top:325px;width:100px">121,79</div>
<div class="a dc" style="left:458px;top:325px;width:100px">121,79</div>
<div class="a dc" style="left:558px;top:325px;width:100px"></div>
<div class="a dc" style="left:658px;top:325px;width:100px"></div>
<div class="a dc" style="left:758px;top:325px;width:100px">121,79</div>
<div class="a dc" style="left:858px;top:325px;width:100px">121,79</div>
<div class="a hc rh" style="left:178px;top:344px;width:180px;height:21px;border-left:none;letter-spacing:-0.232px">K-00123  Maria</div>
<div class="a dc" style="left:358px;top:345px;width:100px">322,63</div>
<div class="a dc" style="left:458px;top:345px;width:100px">322,63</div>
<div class="a dc" style="left:558px;top:345px;width:100px"></div>
<div class="a dc" style="left:658px;top:345px;width:100px"></div>
<div class="a dc" style="left:758px;top:345px;width:100px">322,63</div>
<div class="a dc" style="left:858px;top:345px;width:100px">322,63</div>
<div class="a hc rh" style="left:178px;top:364px;width:180px;height:21px;border-left:none;letter-spacing:-0.456px">Suma końcowa</div>
<div class="a dc" style="left:358px;top:365px;width:100px">2 845,35</div>
<div class="a dc" style="left:458px;top:365px;width:100px">2 626,55</div>
<div class="a dc" style="left:558px;top:365px;width:100px">108,45</div>
<div class="a dc" style="left:658px;top:365px;width:100px">88,45</div>
<div class="a dc" style="left:758px;top:365px;width:100px">2 953,80</div>
<div class="a dc" style="left:858px;top:365px;width:100px">2 715,00</div>
<div class="a" style="left:358px;top:365px;width:100px;height:19px;border:1px dotted #000"></div>
<div class="a" style="left:178px;top:400px;width:1028px;height:8px;background:#fff;border-top:1px solid #8fa8cb;border-bottom:1px solid #8fa8cb"></div>
<svg class="a" style="left:684px;top:403px" width="14" height="2" viewBox="0 0 14 2"><path d="M0 1h14" stroke="#6f8cba" stroke-width="2" stroke-dasharray="2 2"/></svg>

<!--CHART-START-->
<svg class="a" style="left:178px;top:408px" width="1028" height="270" viewBox="0 0 1028 270" font-family="Liberation Sans" font-size="11">
<defs><linearGradient id="gb" x1="0" y1="0" x2="0" y2="1"><stop offset="0" stop-color="#5585c0"/><stop offset="1" stop-color="#2c5a96"/></linearGradient><linearGradient id="gr" x1="0" y1="0" x2="0" y2="1"><stop offset="0" stop-color="#c4534f"/><stop offset="1" stop-color="#8c302e"/></linearGradient><linearGradient id="gg" x1="0" y1="0" x2="0" y2="1"><stop offset="0" stop-color="#9dbc5b"/><stop offset="1" stop-color="#6f873d"/></linearGradient><linearGradient id="gp" x1="0" y1="0" x2="0" y2="1"><stop offset="0" stop-color="#8266a4"/><stop offset="1" stop-color="#5a4574"/></linearGradient><pattern id="hb" width="4" height="4" patternUnits="userSpaceOnUse" x="1" y="1"><path d="M-1 5L5 -1M-1 1L1 -1M3 5L5 3" stroke="#fff" stroke-width="1" stroke-opacity=".52"/></pattern><pattern id="hr" width="4" height="4" patternUnits="userSpaceOnUse" x="1" y="1"><path d="M-1 5L5 -1M-1 1L1 -1M3 5L5 3" stroke="#fff" stroke-width="1" stroke-opacity=".52"/></pattern></defs>
<rect x="42.5" y="10.5" width="786.0" height="230.0" fill="#fff" stroke="#c8c8c8"/>
<path d="M37.5 240.5h5" stroke="#8a8a8a"/><text x="24.2" y="244.0" fill="#000" textLength="6.1" lengthAdjust="spacingAndGlyphs">0</text>
<path d="M42.5 205.5H828.5" stroke="#d6d6d6"/><path d="M37.5 205.5h5" stroke="#8a8a8a"/><text x="13.1" y="209.0" fill="#000" textLength="17.2" lengthAdjust="spacingAndGlyphs">200</text>
<path d="M42.5 170.5H828.5" stroke="#d6d6d6"/><path d="M37.5 170.5h5" stroke="#8a8a8a"/><text x="13.1" y="174.0" fill="#000" textLength="17.2" lengthAdjust="spacingAndGlyphs">400</text>
<path d="M42.5 136.5H828.5" stroke="#d6d6d6"/><path d="M37.5 136.5h5" stroke="#8a8a8a"/><text x="13.1" y="140.0" fill="#000" textLength="17.2" lengthAdjust="spacingAndGlyphs">600</text>
<path d="M42.5 101.5H828.5" stroke="#d6d6d6"/><path d="M37.5 101.5h5" stroke="#8a8a8a"/><text x="13.1" y="105.0" fill="#000" textLength="17.2" lengthAdjust="spacingAndGlyphs">800</text>
<path d="M42.5 66.5H828.5" stroke="#d6d6d6"/><path d="M37.5 66.5h5" stroke="#8a8a8a"/><text x="7.3" y="70.0" fill="#000" textLength="23.0" lengthAdjust="spacingAndGlyphs">1000</text>
<path d="M42.5 31.5H828.5" stroke="#d6d6d6"/><path d="M37.5 31.5h5" stroke="#8a8a8a"/><text x="7.3" y="35.0" fill="#000" textLength="23.0" lengthAdjust="spacingAndGlyphs">1200</text>
<path d="M39.5 228.5h3" stroke="#a0a0a0"/><path d="M39.5 217.5h3" stroke="#a0a0a0"/><path d="M39.5 194.5h3" stroke="#a0a0a0"/><path d="M39.5 182.5h3" stroke="#a0a0a0"/><path d="M39.5 159.5h3" stroke="#a0a0a0"/><path d="M39.5 147.5h3" stroke="#a0a0a0"/><path d="M39.5 124.5h3" stroke="#a0a0a0"/><path d="M39.5 112.5h3" stroke="#a0a0a0"/><path d="M39.5 89.5h3" stroke="#a0a0a0"/><path d="M39.5 77.5h3" stroke="#a0a0a0"/><path d="M39.5 54.5h3" stroke="#a0a0a0"/><path d="M39.5 43.5h3" stroke="#a0a0a0"/><path d="M39.5 19.5h3" stroke="#a0a0a0"/>
<path d="M42.5 10.5V240.5H828.5" fill="none" stroke="#8a8a8a"/>
<path d="M121.5 240.5v5" stroke="#8a8a8a"/><path d="M58.5 240.5v3" stroke="#a8a8a8"/><path d="M90.5 240.5v3" stroke="#a8a8a8"/><path d="M152.5 240.5v3" stroke="#a8a8a8"/><path d="M184.5 240.5v3" stroke="#a8a8a8"/><path d="M278.5 240.5v5" stroke="#8a8a8a"/><path d="M215.5 240.5v3" stroke="#a8a8a8"/><path d="M247.5 240.5v3" stroke="#a8a8a8"/><path d="M309.5 240.5v3" stroke="#a8a8a8"/><path d="M341.5 240.5v3" stroke="#a8a8a8"/><path d="M435.5 240.5v5" stroke="#8a8a8a"/><path d="M372.5 240.5v3" stroke="#a8a8a8"/><path d="M404.5 240.5v3" stroke="#a8a8a8"/><path d="M466.5 240.5v3" stroke="#a8a8a8"/><path d="M498.5 240.5v3" stroke="#a8a8a8"/><path d="M592.5 240.5v5" stroke="#8a8a8a"/><path d="M529.5 240.5v3" stroke="#a8a8a8"/><path d="M561.5 240.5v3" stroke="#a8a8a8"/><path d="M623.5 240.5v3" stroke="#a8a8a8"/><path d="M655.5 240.5v3" stroke="#a8a8a8"/><path d="M749.5 240.5v5" stroke="#8a8a8a"/><path d="M686.5 240.5v3" stroke="#a8a8a8"/><path d="M718.5 240.5v3" stroke="#a8a8a8"/><path d="M780.5 240.5v3" stroke="#a8a8a8"/><path d="M812.5 240.5v3" stroke="#a8a8a8"/>
<rect x="70" y="77" width="25" height="163" fill="url(#gb)"/><rect x="70.5" y="77.5" width="24" height="162.5" fill="none" stroke="#2c5a96" stroke-opacity=".55"/>
<rect x="96" y="94" width="25" height="146" fill="url(#gr)"/><rect x="96.5" y="94.5" width="24" height="145.5" fill="none" stroke="#8c302e" stroke-opacity=".55"/>
<rect x="122" y="237" width="24" height="3" fill="url(#gg)"/><rect x="122.5" y="237.5" width="23" height="2.5" fill="none" stroke="#6f873d" stroke-opacity=".55"/>
<rect x="147" y="237" width="25" height="3" fill="url(#gp)"/><rect x="147.5" y="237.5" width="24" height="2.5" fill="none" stroke="#5a4574" stroke-opacity=".55"/>
<rect x="228" y="31" width="24" height="209" fill="url(#gb)"/><rect x="229" y="32" width="22" height="208" fill="url(#hb)"/><rect x="228.5" y="31.5" width="23" height="208.5" fill="none" stroke="#2c5a96" stroke-opacity=".55"/>
<rect x="253" y="52" width="25" height="188" fill="url(#gr)"/><rect x="254" y="53" width="23" height="187" fill="url(#hr)"/><rect x="253.5" y="52.5" width="24" height="187.5" fill="none" stroke="#8c302e" stroke-opacity=".55"/>
<rect x="385" y="194" width="24" height="46" fill="url(#gb)"/><rect x="385.5" y="194.5" width="23" height="45.5" fill="none" stroke="#2c5a96" stroke-opacity=".55"/>
<rect x="410" y="194" width="25" height="46" fill="url(#gr)"/><rect x="410.5" y="194.5" width="24" height="45.5" fill="none" stroke="#8c302e" stroke-opacity=".55"/>
<rect x="436" y="224" width="25" height="16" fill="url(#gg)"/><rect x="436.5" y="224.5" width="24" height="15.5" fill="none" stroke="#6f873d" stroke-opacity=".55"/>
<rect x="462" y="228" width="24" height="12" fill="url(#gp)"/><rect x="462.5" y="228.5" width="23" height="11.5" fill="none" stroke="#5a4574" stroke-opacity=".55"/>
<rect x="542" y="219" width="25" height="21" fill="url(#gb)"/><rect x="542.5" y="219.5" width="24" height="20.5" fill="none" stroke="#2c5a96" stroke-opacity=".55"/>
<rect x="568" y="219" width="24" height="21" fill="url(#gr)"/><rect x="568.5" y="219.5" width="23" height="20.5" fill="none" stroke="#8c302e" stroke-opacity=".55"/>
<rect x="699" y="184" width="25" height="56" fill="url(#gb)"/><rect x="699.5" y="184.5" width="24" height="55.5" fill="none" stroke="#2c5a96" stroke-opacity=".55"/>
<rect x="725" y="184" width="24" height="56" fill="url(#gr)"/><rect x="725.5" y="184.5" width="23" height="55.5" fill="none" stroke="#8c302e" stroke-opacity=".55"/>
<path d="M284.5 10.0V240.0" stroke="#e236e2" stroke-width="1.2"/>
<text x="91.8" y="260" fill="#000" xml:space="preserve" textLength="58.7" lengthAdjust="spacing">K-00001  DX</text>
<text x="230.3" y="260" fill="#000" xml:space="preserve" textLength="93.6" lengthAdjust="spacing">K-00002  NOVITUS!</text>
<text x="364.5" y="260" fill="#000" xml:space="preserve" textLength="140.5" lengthAdjust="spacing">K-00003  MAKARON - MALMA</text>
<text x="546.9" y="260" fill="#000" xml:space="preserve" textLength="88.6" lengthAdjust="spacing">K-00044  TEST123</text>
<text x="712.1" y="260" fill="#000" xml:space="preserve" textLength="72.2" lengthAdjust="spacing">K-00123  Maria</text>
<rect x="839.5" y="10.5" width="177" height="75" fill="#fff" stroke="#b4b4b4"/>
<rect x="843" y="14" width="18" height="14" fill="url(#gb)"/><rect x="843.5" y="14.5" width="17" height="13" fill="none" stroke="#2c5a96" stroke-opacity=".5"/><text x="866" y="25" fill="#000" textLength="139" lengthAdjust="spacing">1 | 2013 | 4 | listopad | Netto</text>
<rect x="843" y="32" width="18" height="14" fill="url(#gr)"/><rect x="843.5" y="32.5" width="17" height="13" fill="none" stroke="#8c302e" stroke-opacity=".5"/><text x="866" y="43" fill="#000" textLength="141" lengthAdjust="spacing">1 | 2013 | 4 | listopad | Marża</text>
<rect x="843" y="50" width="18" height="14" fill="url(#gg)"/><rect x="843.5" y="50.5" width="17" height="13" fill="none" stroke="#6f873d" stroke-opacity=".5"/><text x="866" y="61" fill="#000" textLength="139" lengthAdjust="spacing">1 | 2014 | 1 | styczeń | Netto</text>
<rect x="843" y="68" width="18" height="14" fill="url(#gp)"/><rect x="843.5" y="68.5" width="17" height="13" fill="none" stroke="#5a4574" stroke-opacity=".5"/><text x="866" y="79" fill="#000" textLength="141" lengthAdjust="spacing">1 | 2014 | 1 | styczeń | Marża</text>
<rect x="296.5" y="61.5" width="240" height="116" rx="4" fill="#fff" stroke="#9a9a9a"/>
<text x="309" y="83" fill="#000" xml:space="preserve" textLength="93.6" lengthAdjust="spacing">K-00002  NOVITUS!</text>
<rect x="308" y="93.4" width="15" height="12" fill="#4f81bd"/><text x="327" y="103.0" fill="#000" textLength="188" lengthAdjust="spacing">1 | 2013 | 4 | listopad | Netto : 1202,01</text>
<rect x="308" y="113.7" width="15" height="12" fill="#c0504d"/><text x="327" y="123.3" fill="#000" textLength="190" lengthAdjust="spacing">1 | 2013 | 4 | listopad | Marża : 1082,11</text>
<rect x="308" y="134.0" width="15" height="12" fill="#9bbb59"/><text x="327" y="143.6" fill="#000" textLength="155" lengthAdjust="spacing">1 | 2014 | 1 | styczeń | Netto : 0</text>
<rect x="308" y="154.3" width="15" height="12" fill="#8064a2"/><text x="327" y="163.9" fill="#000" textLength="157" lengthAdjust="spacing">1 | 2014 | 1 | styczeń | Marża : 0</text>
</svg>
<!--CHART-END-->

<div class="a" style="left:1206px;top:76px;width:62px;height:604px;background:#ccdaed;border-left:1px solid #8fa8cb"></div>
<div class="a" style="left:1207px;top:80px;width:58px;height:29px;background:linear-gradient(90deg,#3f80e0,#4a8ae6);border:1px solid #2f66c0"></div><div class="t" style="left:1213px;top:89px;color:#1e2f5f">Tabela</div>
<div class="a" style="left:1207px;top:138px;width:58px;height:29px;background:linear-gradient(90deg,#f59a88,#f8a89c);border:1px solid #e8826e"></div><div class="t" style="left:1213px;top:147px;color:#2a2f4f">Wykresy</div>
<div class="a" style="left:1207px;top:167px;width:58px;height:29px;background:linear-gradient(90deg,#9c76d2,#a682da);border:1px solid #8a5fc4"></div><div class="t" style="left:1213px;top:176px;color:#33205f">Sumy</div>
<div class="a" style="left:1206px;top:108px;width:61px;height:31px;background:#fff;border:1px solid #8fa8cb;border-left-color:#fff"></div><div class="t" style="left:1215px;top:118px;color:#1e2f4f">Analizy</div>

<div id="status" class="a"></div>
<div class="t" style="color:#1f3c78;left:13px;top:693px;letter-spacing:-0.256px">Sz@rk Biznes 14.01.02</div>
<div class="t" style="color:#1f3c78;left:138px;top:693px;letter-spacing:0.031px">Użytkownik: Administrator/3/2014</div>
<div class="t" style="color:#1f3c78;left:317px;top:693px;letter-spacing:0.012px">Zarejestrowano dla: Tryb Debug !!!,  NIP: 123-456-78-90,  SN: 701000002</div>
<div class="a" style="left:131px;top:690px;width:2px;height:19px;border-left:1px solid #afc1dc;border-right:1px solid #e6eef9"></div>
<div class="a" style="left:309px;top:690px;width:2px;height:19px;border-left:1px solid #afc1dc;border-right:1px solid #e6eef9"></div>
<svg class="a" style="left:1256px;top:696px" width="14" height="14" viewBox="1256 696 14 14"><g fill="#e4edf8"><rect x="1267" y="699" width="2" height="2"/><rect x="1263" y="703" width="2" height="2"/><rect x="1267" y="703" width="2" height="2"/><rect x="1259" y="707" width="2" height="2"/><rect x="1263" y="707" width="2" height="2"/><rect x="1267" y="707" width="2" height="2"/></g><g fill="#7b96bd"><rect x="1266" y="698" width="2" height="2"/><rect x="1262" y="702" width="2" height="2"/><rect x="1266" y="702" width="2" height="2"/><rect x="1258" y="706" width="2" height="2"/><rect x="1262" y="706" width="2" height="2"/><rect x="1266" y="706" width="2" height="2"/></g></svg>

</body></html>
